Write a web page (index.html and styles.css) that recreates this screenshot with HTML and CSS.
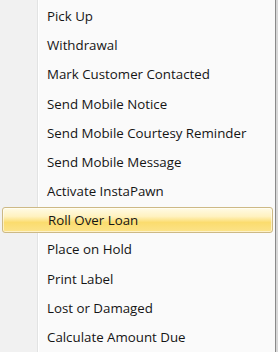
FILE: index.html
```html
<!DOCTYPE html>
<html>
<head>
<meta charset="utf-8">
<link rel="stylesheet" href="styles.css">
</head>
<body>
<div class="frame">
  <ul class="menu">
    <li class="item">Pick Up</li>
    <li class="item">Withdrawal</li>
    <li class="item">Mark Customer Contacted</li>
    <li class="item">Send Mobile Notice</li>
    <li class="item">Send Mobile Courtesy Reminder</li>
    <li class="item">Send Mobile Message</li>
    <li class="item">Activate InstaPawn</li>
    <li class="item active">Roll Over Loan</li>
    <li class="item">Place on Hold</li>
    <li class="item">Print Label</li>
    <li class="item">Lost or Damaged</li>
    <li class="item">Calculate Amount Due</li>
  </ul>
  <div class="edge"></div>
</div>
</body>
</html>
```

FILE: styles.css
```css
html, body {
  margin: 0;
  padding: 0;
  background: #fafafa;
}
.frame {
  display: flex;
  width: 278px;
  height: 352px;
  overflow: hidden;
}
.menu {
  list-style: none;
  margin: 0;
  padding: 1.5px 0 0 0;
  width: 275px;
  background: linear-gradient(to right, #f1f1f1 0, #f1f1f1 37px, #e2e3e3 37px, #e2e3e3 38px, #ffffff 38px, #ffffff 39px, #fafafa 39px);
  font-family: "Open Sans", "Noto Sans", sans-serif;
  font-size: 13.3px;
  color: #151515;
}
.item {
  height: 29.18px;
  display: flex;
  align-items: center;
  padding-left: 47px;
  box-sizing: border-box;
  position: relative;
  white-space: nowrap;
}
.item.active {
  margin: 0 2px 0 2px;
  padding-left: 45px;
  border: 1px solid #cdb985;
  border-radius: 3px;
  background: linear-gradient(to bottom, #fffbe6 0%, #fff2c0 35%, #fde590 50%, #fbdc6e 60%, #fce38a 100%);
  box-shadow: inset 0 0 0 1px rgba(255,255,255,0.55);
  height: 26px;
  margin-top: 1.6px;
  margin-bottom: 1.6px;
}
.edge {
  width: 3px;
  background: linear-gradient(to right, #8a8a8a 0, #8a8a8a 1px, #d8d8d8 1px);
}
```
